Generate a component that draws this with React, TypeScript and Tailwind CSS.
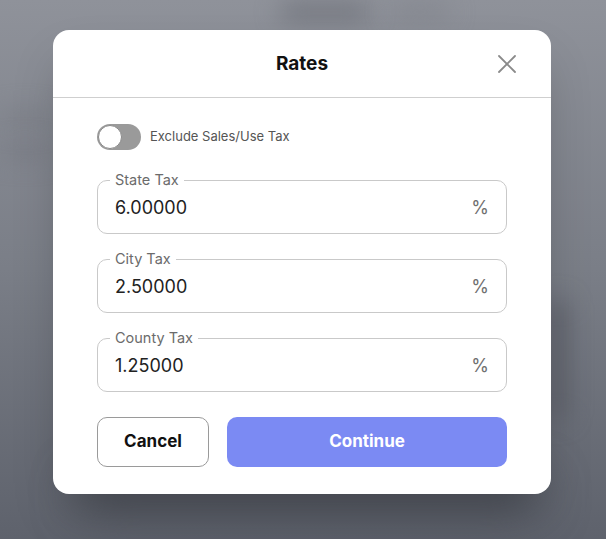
import { X } from "lucide-react";

const fields = [
  { label: "State Tax", value: "6.00000" },
  { label: "City Tax", value: "2.50000" },
  { label: "County Tax", value: "1.25000" },
];

function RateField({ label, value }: { label: string; value: string }) {
  return (
    <fieldset className="h-[61px] rounded-[10px] border border-[#c9c9c9] px-[12px]">
      <legend className="px-[5px] text-[14.5px] leading-[14px] text-[#6b6b6b]">
        {label}
      </legend>
      <div className="flex h-[40px] items-center justify-between pl-[5px] pr-[5px]">
        <span className="text-[18px] text-[#222]">{value}</span>
        <span className="text-[18px] text-[#707070]">%</span>
      </div>
    </fieldset>
  );
}

export default function App() {
  return (
    <div
      className="relative h-[539px] w-full overflow-hidden bg-gradient-to-b from-[#8f929a] via-[#7a7e87] to-[#5e626c]"
      style={{ fontFamily: "Inter, 'Noto Sans', sans-serif" }}
    >
      {/* blurred page underneath */}
      <div className="absolute left-[280px] top-[4px] h-[16px] w-[90px] rounded-full bg-[#6f727a] blur-md" />
      <div className="absolute left-[390px] top-[6px] h-[12px] w-[60px] rounded-full bg-[#80838b] blur-md" />
      <div className="absolute left-[0px] top-[112px] h-[14px] w-[50px] rounded-full bg-[#7b7e86] blur-md" />
      <div className="absolute left-[0px] top-[146px] h-[12px] w-[50px] rounded-full bg-[#767982] blur-md" />
      <div className="absolute left-[550px] top-[300px] h-[120px] w-[16px] rounded-full bg-[#5a5d66] blur-md" />
      <div className="absolute left-[80px] top-[480px] h-[30px] w-[460px] rounded-full bg-[#4b4f58] blur-xl" />

      <div className="relative flex justify-center pr-[2px] pt-[30px]">
        <div className="w-[498px] rounded-[16px] bg-white shadow-2xl">
          <div className="relative flex h-[68px] items-center justify-center border-b border-[#cfcfcf] pt-[2px]">
            <h2 className="text-[19px] font-bold text-[#111]">Rates</h2>
            <button className="absolute right-[28px] top-[18px] text-[#8a8a8a]">
              <X size={32} strokeWidth={1.35} />
            </button>
          </div>

          <div className="flex flex-col px-[44px] pb-[27px] pt-[26px]">
            <div className="flex items-center gap-[9px]">
              <div className="flex h-[26px] w-[44px] items-center rounded-full bg-[#9a9a9a] p-[1px]">
                <div className="h-[24px] w-[24px] rounded-full border border-[#8a8a8a] bg-white" />
              </div>
              <span className="text-[13px] text-[#555]">Exclude Sales/Use Tax</span>
            </div>

            <div className="mt-[23px] flex flex-col gap-[18px]">
              {fields.map((field) => (
                <RateField key={field.label} label={field.label} value={field.value} />
              ))}
            </div>

            <div className="mt-[25px] flex gap-[18px]">
              <button className="h-[50px] w-[112px] rounded-[10px] border border-[#9a9a9a] text-[17px] font-bold text-[#111]">
                Cancel
              </button>
              <button className="h-[50px] flex-1 rounded-[10px] bg-[#7b8af3] text-[17px] font-bold text-white">
                Continue
              </button>
            </div>
          </div>
        </div>
      </div>
    </div>
  );
}
